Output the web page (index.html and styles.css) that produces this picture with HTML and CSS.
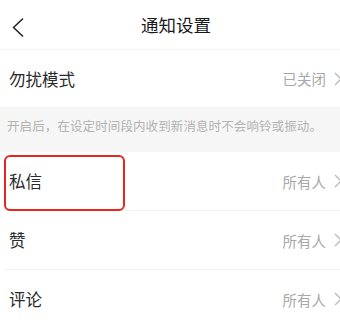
FILE: index.html
```html
<!DOCTYPE html>
<html lang="zh-CN">
<head>
<meta charset="utf-8">
<link rel="stylesheet" href="styles.css">
</head>
<body>
<div class="page">
  <header class="topbar">
    <svg class="back" width="12" height="20" viewBox="0 0 12 20"><polyline points="10.5,1 1.5,9.5 10.5,18" fill="none" stroke="#222" stroke-width="1.6" stroke-linecap="round" stroke-linejoin="round"/></svg>
    <h1 class="title">通知设置</h1>
  </header>
  <div class="row first">
    <span class="label">勿扰模式</span>
    <span class="value">已关闭<svg class="chev" width="8" height="14" viewBox="0 0 8 14"><polyline points="1,1 7,7 1,13" fill="none" stroke="#bbb" stroke-width="1.4"/></svg></span>
  </div>
  <div class="hint">开启后，在设定时间段内收到新消息时不会响铃或振动。</div>
  <div class="row line">
    <span class="label">私信</span>
    <span class="value">所有人<svg class="chev" width="8" height="14" viewBox="0 0 8 14"><polyline points="1,1 7,7 1,13" fill="none" stroke="#bbb" stroke-width="1.4"/></svg></span>
  </div>
  <div class="row line">
    <span class="label">赞</span>
    <span class="value">所有人<svg class="chev" width="8" height="14" viewBox="0 0 8 14"><polyline points="1,1 7,7 1,13" fill="none" stroke="#bbb" stroke-width="1.4"/></svg></span>
  </div>
  <div class="row">
    <span class="label">评论</span>
    <span class="value">所有人<svg class="chev" width="8" height="14" viewBox="0 0 8 14"><polyline points="1,1 7,7 1,13" fill="none" stroke="#bbb" stroke-width="1.4"/></svg></span>
  </div>
  <div class="highlight"></div>
</div>
</body>
</html>
```

FILE: styles.css
```css
html, body {
  margin: 0;
  padding: 0;
  background: #fff;
  overflow: hidden;
}
body {
  width: 340px;
  height: 322px;
  font-family: "Noto Sans CJK SC", "Noto Sans", sans-serif;
}
.page {
  position: relative;
  width: 352px;
}
.topbar {
  position: relative;
  height: 49px;
  border-bottom: 1px solid #f2f2f2;
  display: flex;
  align-items: center;
  justify-content: center;
}
.back {
  position: absolute;
  left: 12px;
  top: 18px;
}
.title {
  margin: 0;
  font-size: 17.5px;
  font-weight: normal;
  color: #1a1a1a;
  line-height: 1;
}
.row {
  height: 58px;
  margin-left: 5px;
  padding-left: 4px;
  padding-right: 10px;
  display: flex;
  align-items: center;
  justify-content: space-between;
}
.row.first {
  height: 57px;
}
.row.line {
  border-bottom: 1px solid #f2f2f2;
}
.label {
  font-size: 16.5px;
  color: #2a2a2a;
}
.value {
  display: flex;
  align-items: center;
  font-size: 14.5px;
  color: #a8a8a8;
}
.chev {
  margin-left: 8px;
}
.hint {
  height: 37px;
  padding-bottom: 8px;
  background: #f6f6f6;
  display: flex;
  align-items: center;
  padding-left: 7px;
  font-size: 12.5px;
  letter-spacing: 0.1px;
  white-space: nowrap;
  color: #b2b2b2;
}
.highlight {
  position: absolute;
  left: 4px;
  top: 155px;
  width: 117px;
  height: 52px;
  border: 2px solid #e8261f;
  border-radius: 6px;
}
```
